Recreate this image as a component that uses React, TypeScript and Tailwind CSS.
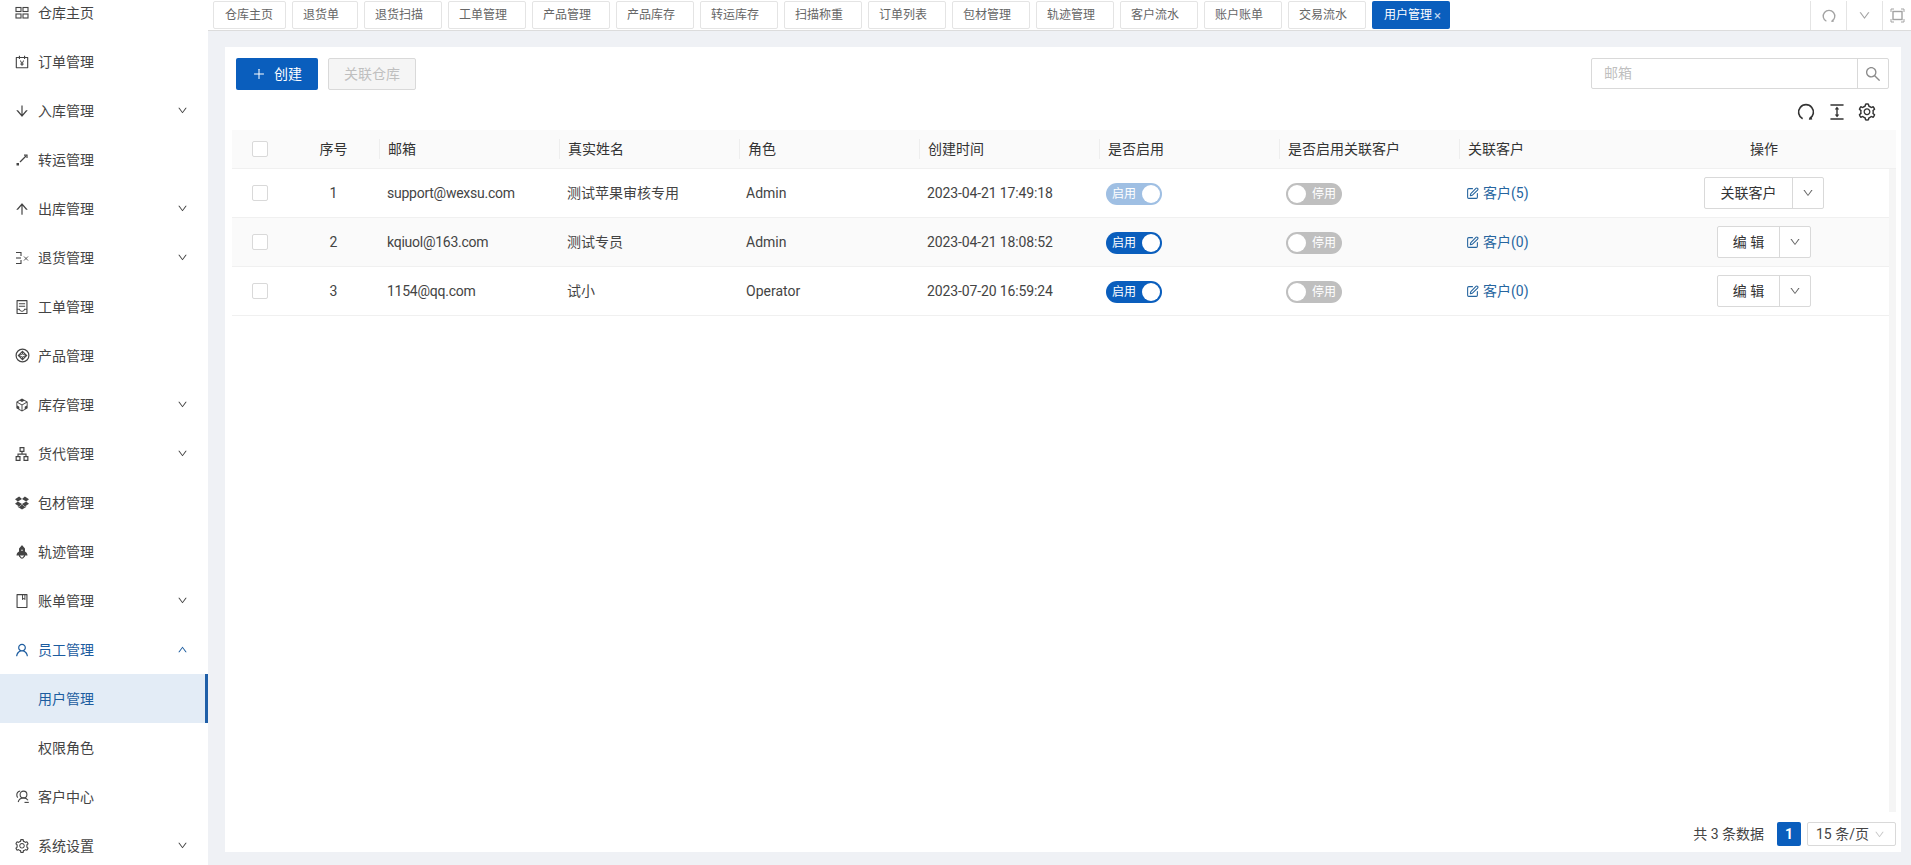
import { type ReactNode } from "react"
import {
  AiFillRocket,
  AiOutlineAccountBook,
  AiOutlineApartment,
  AiOutlineArrowDown,
  AiOutlineArrowUp,
  AiOutlineBook,
  AiOutlineCodeSandbox,
  AiOutlineColumnHeight,
  AiOutlineContainer,
  AiOutlineDown,
  AiOutlineDropbox,
  AiOutlinePlus,
  AiOutlineSearch,
  AiOutlineSetting,
  AiOutlineUp,
  AiOutlineUser,
} from "react-icons/ai"
import { SquarePen } from "lucide-react"

function HomeIcon() {
  return (
    <svg width="14" height="14" viewBox="0 0 14 14" fill="none" stroke="currentColor" strokeWidth="1.1">
      <rect x="1" y="1.5" width="5" height="4" />
      <rect x="8" y="1.5" width="5" height="4" />
      <rect x="1" y="8" width="5" height="4" />
      <rect x="8" y="8" width="5" height="4" />
    </svg>
  )
}

function TransferIcon() {
  return (
    <svg width="14" height="14" viewBox="0 0 14 14" fill="none" stroke="currentColor" strokeWidth="1.2">
      <path d="M5 9 L11 3" />
      <path d="M9 2.2 H12 V5" />
      <rect x="1.5" y="10" width="2.5" height="2.5" fill="currentColor" stroke="none" />
    </svg>
  )
}

function ReturnIcon() {
  return (
    <svg width="14" height="14" viewBox="0 0 14 14" fill="none" stroke="currentColor" strokeWidth="1.1">
      <path d="M1 1.5 H6 V5" />
      <path d="M6 9 V12.5 H1" />
      <path d="M1 7 H6" />
      <path d="M9 5.5 L13 9.5 M13 5.5 L9 9.5" strokeWidth="0.9" />
    </svg>
  )
}

function CodepenIcon() {
  return (
    <svg width="15" height="15" viewBox="0 0 15 15" fill="none" stroke="currentColor" strokeWidth="1.2">
      <circle cx="7.5" cy="7.5" r="6.4" />
      <path d="M7.5 3.4 L11.6 7.5 L7.5 11.6 L3.4 7.5 Z" />
      <path d="M3.4 7.5 L7.5 6 L11.6 7.5 M7.5 3.4 V6 M3.4 7.5 L7.5 9 L11.6 7.5 M7.5 11.6 V9" strokeWidth="0.9" />
    </svg>
  )
}

function ClientIcon() {
  return (
    <svg width="15" height="15" viewBox="0 0 15 15" fill="none" stroke="currentColor" strokeWidth="1.1">
      <circle cx="8.5" cy="5.5" r="3.4" />
      <path d="M3.2 13 C3.8 10.5 6 9 8.5 9 C10.5 9 12.2 10 13 11.2" />
      <path d="M5.2 2 C3.2 2.4 1.8 4 1.8 6 C1.8 7 2.2 8 2.8 8.6" />
      <path d="M9.5 13.4 H13.8" />
    </svg>
  )
}

function ReloadIcon({ size, className }: { size: number; className?: string }) {
  return (
    <svg width={size} height={size} viewBox="0 0 16 16" fill="none" stroke="currentColor" strokeWidth="1.5" className={className}>
      <path d="M5 14 A6.6 6.6 0 1 1 11 14" />
      <path d="M12.6 11.6 L10.4 14.8 L13.6 14.6 Z" fill="currentColor" stroke="none" />
    </svg>
  )
}

function FullIcon() {
  return (
    <svg width="15" height="15" viewBox="0 0 15 15" fill="none" stroke="currentColor" strokeWidth="1">
      <path d="M1 4 V1 H4 M11 1 H14 V4 M14 11 V14 H11 M4 14 H1 V11" />
      <rect x="3" y="3.5" width="9" height="8" strokeWidth="1.4" />
    </svg>
  )
}

type MenuItem = {
  label: string
  icon?: ReactNode
  arrow?: "down" | "up"
  active?: boolean
  selected?: boolean
}

const menu: MenuItem[] = [
  { label: "仓库主页", icon: <HomeIcon /> },
  { label: "订单管理", icon: <AiOutlineAccountBook size={16} /> },
  { label: "入库管理", icon: <AiOutlineArrowDown size={16} />, arrow: "down" },
  { label: "转运管理", icon: <TransferIcon /> },
  { label: "出库管理", icon: <AiOutlineArrowUp size={16} />, arrow: "down" },
  { label: "退货管理", icon: <ReturnIcon />, arrow: "down" },
  { label: "工单管理", icon: <AiOutlineContainer size={16} /> },
  { label: "产品管理", icon: <CodepenIcon /> },
  { label: "库存管理", icon: <AiOutlineCodeSandbox size={16} />, arrow: "down" },
  { label: "货代管理", icon: <AiOutlineApartment size={16} />, arrow: "down" },
  { label: "包材管理", icon: <AiOutlineDropbox size={16} /> },
  { label: "轨迹管理", icon: <AiFillRocket size={16} /> },
  { label: "账单管理", icon: <AiOutlineBook size={16} />, arrow: "down" },
  { label: "员工管理", icon: <AiOutlineUser size={16} />, arrow: "up", active: true },
  { label: "用户管理", selected: true },
  { label: "权限角色" },
  { label: "客户中心", icon: <ClientIcon /> },
  { label: "系统设置", icon: <AiOutlineSetting size={16} />, arrow: "down" },
]

const tabs = [
  { label: "仓库主页", width: "w-[73px] pl-[11px]" },
  { label: "退货单", width: "w-[66px] pl-[10px]" },
  { label: "退货扫描", width: "w-[78px] pl-[10px]" },
  { label: "工单管理", width: "w-[78px] pl-[10px]" },
  { label: "产品管理", width: "w-[78px] pl-[10px]" },
  { label: "产品库存", width: "w-[78px] pl-[10px]" },
  { label: "转运库存", width: "w-[78px] pl-[10px]" },
  { label: "扫描称重", width: "w-[78px] pl-[10px]" },
  { label: "订单列表", width: "w-[78px] pl-[10px]" },
  { label: "包材管理", width: "w-[78px] pl-[10px]" },
  { label: "轨迹管理", width: "w-[78px] pl-[10px]" },
  { label: "客户流水", width: "w-[78px] pl-[10px]" },
  { label: "账户账单", width: "w-[78px] pl-[10px]" },
  { label: "交易流水", width: "w-[78px] pl-[10px]" },
]

const users = [
  { no: 1, email: "support@wexsu.com", name: "测试苹果审核专用", role: "Admin", time: "2023-04-21 17:49:18", faded: true, link: "客户(5)", action: "关联客户", wide: true },
  { no: 2, email: "kqiuol@163.com", name: "测试专员", role: "Admin", time: "2023-04-21 18:08:52", faded: false, link: "客户(0)", action: "编 辑", wide: false },
  { no: 3, email: "1154@qq.com", name: "试小", role: "Operator", time: "2023-07-20 16:59:24", faded: false, link: "客户(0)", action: "编 辑", wide: false },
]

const columns = "grid grid-cols-[56px_91px_180px_180px_180px_180px_180px_180px_180px_1fr] items-center"

function SideMenu() {
  return (
    <aside className="-mt-3 w-[208px] shrink-0 bg-white text-[14px] text-[#444]">
      {menu.map((item) => (
        <div
          key={item.label}
          className={`flex h-[49px] items-center ${item.selected ? "border-r-[3px] border-[#1f5fa8] bg-[#e3ecf6] text-[#1c5c9f]" : ""} ${item.active ? "text-[#1c5c9f]" : ""}`}
        >
          <span className="flex w-[38px] justify-center pl-[6px]">{item.icon}</span>
          <span className="pt-[2px]">{item.label}</span>
          {item.arrow === "down" && <AiOutlineDown size={11} className="ml-auto mr-5" />}
          {item.arrow === "up" && <AiOutlineUp size={11} className="ml-auto mr-5" />}
        </div>
      ))}
    </aside>
  )
}

function TabBar() {
  return (
    <div className="flex h-[31px] shrink-0 items-start border-b border-[#dcdcdc] bg-white pl-[5px] pt-px">
      <div className="flex gap-[6px] text-[12px] text-[#666]">
        {tabs.map((tab) => (
          <div
            key={tab.label}
            className={`flex h-[28px] items-center rounded-[2px] border border-[#e4e4e4] ${tab.width}`}
          >
            {tab.label}
          </div>
        ))}
        <div className="flex h-[28px] w-[78px] items-center gap-0.5 rounded-[2px] bg-[#0a5ebd] pl-3 text-white">
          用户管理<span className="text-[13px] leading-none text-[#c4d9f0]">×</span>
        </div>
      </div>
      <div className="ml-auto flex h-full text-[#a3a3a3]">
        <span className="flex w-9 items-center justify-center border-l border-[#e4e4e4]">
          <ReloadIcon size={14} />
        </span>
        <span className="flex w-9 items-center justify-center border-l border-[#e4e4e4]">
          <AiOutlineDown size={13} />
        </span>
        <span className="flex w-[29px] items-center justify-center border-l border-[#e4e4e4]">
          <FullIcon />
        </span>
      </div>
    </div>
  )
}

function Toggle({ on, faded }: { on: boolean; faded?: boolean }) {
  if (on) {
    return (
      <div className={`mt-px flex h-[22px] w-[56px] items-center justify-between rounded-full pl-[6px] pr-[2px] text-[12px] text-white ${faded ? "bg-[#9fbfe3]" : "bg-[#0a5ebd]"}`}>
        启用
        <span className="h-[18px] w-[18px] rounded-full bg-white" />
      </div>
    )
  }
  return (
    <div className="mt-px flex h-[22px] w-[56px] items-center justify-between rounded-full bg-[#bfbfbf] pl-[2px] pr-[6px] text-[12px] text-white">
      <span className="h-[18px] w-[18px] rounded-full bg-white" />
      停用
    </div>
  )
}

function HeaderCell({ children }: { children: ReactNode }) {
  return (
    <div className="flex h-[20px] items-center border-l border-[#eeeeee] pl-2">{children}</div>
  )
}

function UserTable() {
  return (
    <div className="ml-[7px] mr-[5px] mt-[8px] flex flex-1 flex-col text-[14px] text-[#444]">
      <div className={`${columns} h-[39px] shrink-0 border-b border-[#f0f0f0] bg-[#fafafa] pr-[7px] text-[#333]`}>
        <div className="pl-5">
          <div className="h-4 w-4 rounded-[2px] border border-[#d9d9d9] bg-white" />
        </div>
        <div className="text-center">序号</div>
        <HeaderCell>邮箱</HeaderCell>
        <HeaderCell>真实姓名</HeaderCell>
        <HeaderCell>角色</HeaderCell>
        <HeaderCell>创建时间</HeaderCell>
        <HeaderCell>是否启用</HeaderCell>
        <HeaderCell>是否启用关联客户</HeaderCell>
        <HeaderCell>关联客户</HeaderCell>
        <div className="text-center">操作</div>
      </div>
      <div className="flex flex-1">
        <div className="flex-1">
          {users.map((user) => (
            <div
              key={user.no}
              className={`${columns} h-[49px] border-b border-[#f0f0f0] ${user.no === 2 ? "bg-[#fafafa]" : ""}`}
            >
              <div className="pl-5">
                <div className="h-4 w-4 rounded-[2px] border border-[#d9d9d9] bg-white" />
              </div>
              <div className="text-center">{user.no}</div>
              <div className="pl-2 tracking-[-0.25px]">{user.email}</div>
              <div className="pl-2">{user.name}</div>
              <div className="pl-[7px]">{user.role}</div>
              <div className="pl-2 tracking-[-0.12px]">{user.time}</div>
              <div className="pl-[7px]">
                <Toggle on faded={user.faded} />
              </div>
              <div className="pl-[7px]">
                <Toggle on={false} />
              </div>
              <div className="flex items-center gap-[4px] pl-[7px] text-[#26659f]">
                <SquarePen size={13} />
                {user.link}
              </div>
              <div className="flex justify-center">
                <div className="flex h-8 rounded-[2px] border border-[#d9d9d9] bg-white text-[#333]">
                  <span className={`flex items-center justify-center ${user.wide ? "w-[87px]" : "w-[61px]"}`}>{user.action}</span>
                  <span className="flex w-[31px] items-center justify-center border-l border-[#d9d9d9] text-[#666]">
                    <AiOutlineDown size={12} />
                  </span>
                </div>
              </div>
            </div>
          ))}
        </div>
        <div className="w-[7px] bg-[#f5f5f5]" />
      </div>
    </div>
  )
}

export default function App() {
  return (
    <div className="flex h-screen w-full overflow-hidden bg-[#eff1f5] font-['Roboto','Noto_Sans_CJK_SC',sans-serif]">
      <SideMenu />
      <main className="flex min-w-0 flex-1 flex-col">
        <TabBar />
        <section className="mb-[13px] ml-[17px] mr-[10px] mt-[16px] flex flex-1 flex-col bg-white pt-[11px]">
          <div className="flex items-start justify-between pl-[11px] pr-[12px]">
            <div className="flex gap-[10px] text-[14px]">
              <button className="flex h-8 w-[82px] items-center justify-center gap-2 rounded-[2px] bg-[#0a5ebd] text-white">
                <AiOutlinePlus size={14} />
                创建
              </button>
              <button className="h-8 w-[88px] rounded-[2px] border border-[#d9d9d9] bg-[#f5f5f5] text-[#bfbfbf]">关联仓库</button>
            </div>
            <div className="flex h-[31px] w-[298px] rounded-[2px] border border-[#d9d9d9] text-[14px]">
              <span className="flex flex-1 items-center pl-3 text-[#bfbfbf]">邮箱</span>
              <span className="flex w-[31px] items-center justify-center border-l border-[#d9d9d9] text-[#8c8c8c]">
                <AiOutlineSearch size={18} />
              </span>
            </div>
          </div>
          <div className="mt-[12px] flex items-center justify-end gap-[10px] pr-[24px] text-[#333]">
            <ReloadIcon size={18} className="mr-[2px]" />
            <AiOutlineColumnHeight size={20} />
            <AiOutlineSetting size={20} />
          </div>
          <UserTable />
          <div className="mb-[6px] mr-[5px] mt-[10px] flex items-center justify-end text-[14px] text-[#444]">
            <span>共 3 条数据</span>
            <span className="ml-[13px] flex h-6 w-6 items-center justify-center rounded-[2px] bg-[#0a5ebd] font-bold text-white">1</span>
            <span className="ml-[6px] flex h-6 w-[89px] items-center justify-between rounded-[2px] border border-[#d9d9d9] pl-2 pr-[10px]">
              15 条/页
              <AiOutlineDown size={11} className="text-[#c8c8c8]" />
            </span>
          </div>
        </section>
      </main>
    </div>
  )
}
